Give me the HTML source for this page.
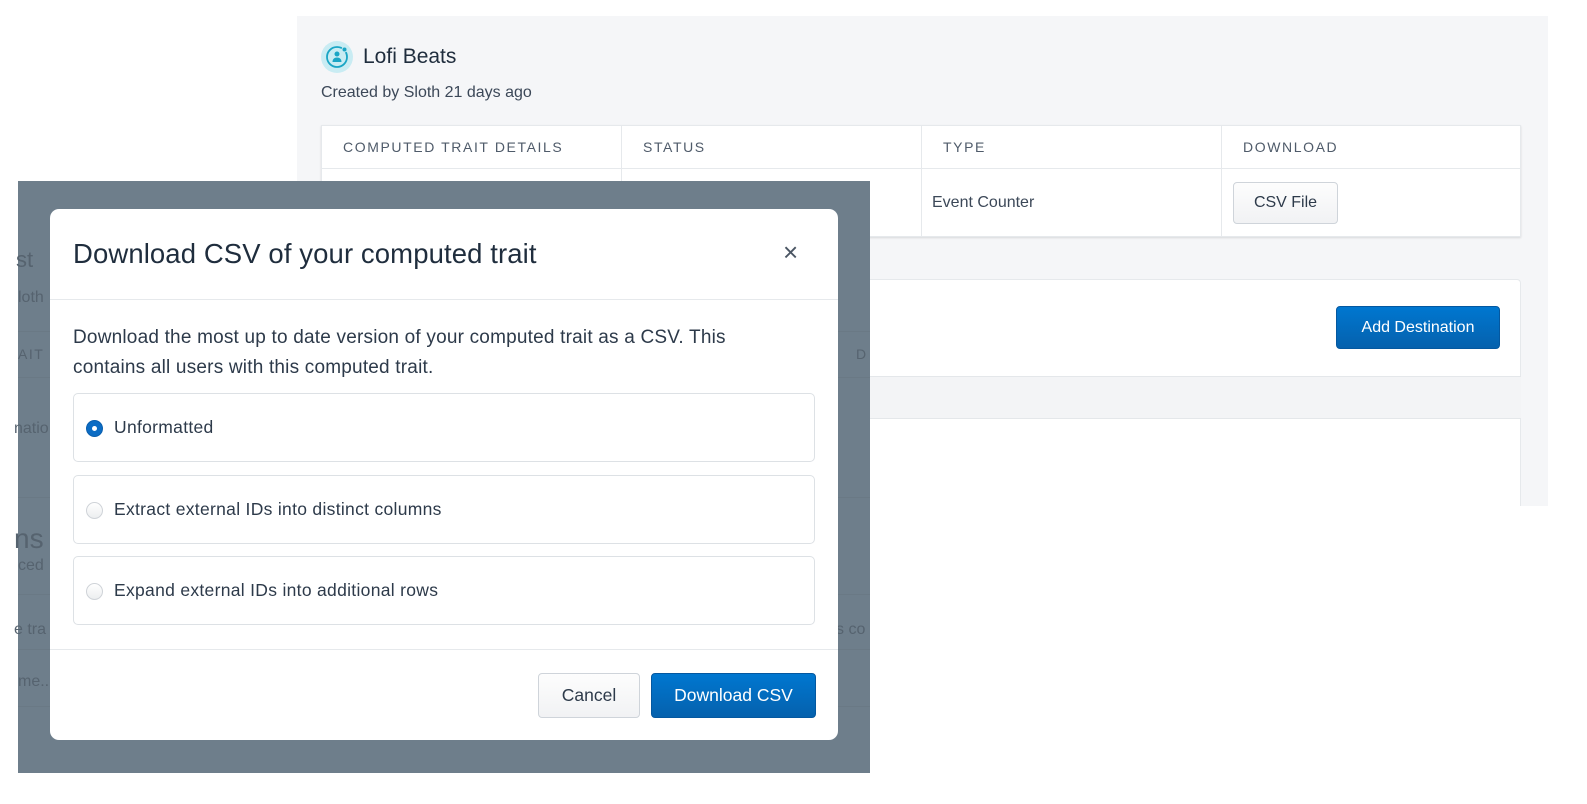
<!DOCTYPE html>
<html><head><meta charset="utf-8"><style>
*{box-sizing:border-box;margin:0;padding:0}
body{width:1587px;height:804px;background:#fff;font-family:"Liberation Sans",sans-serif;position:relative;overflow:hidden;color:#2d3a4a}
.abs{position:absolute}
.panel{left:297px;top:16px;width:1251px;height:490px;background:#f5f6f8}
.table{left:321px;top:125px;width:1200px;height:112px;background:#fff;border:1px solid #e6e9ec;box-shadow:0 1px 2px rgba(0,0,0,.12)}
.th{position:absolute;top:0;height:43px;line-height:43px;font-size:14px;letter-spacing:1.6px;color:#4f5b6a;padding-left:21px;border-right:1px solid #e6e9ec;border-bottom:1px solid #e6e9ec}
.td{position:absolute;top:43px;height:68px;border-right:1px solid #e6e9ec}
.btn{position:absolute;border:1px solid #cfd4da;border-radius:4px;background:linear-gradient(#fdfdfd,#f1f2f4);color:#2d3a4a;text-align:center;font-size:16px}
.blue{position:absolute;border-radius:4px;background:linear-gradient(#0077d0,#0561ad);color:#fff;text-align:center;font-size:16px;border:1px solid #0458a0}
.overlay{left:18px;top:181px;width:852px;height:592px;background:#6e7e8b}
.modal{left:50px;top:209px;width:788px;height:531px;background:#fff;border-radius:9px}
.opt{position:absolute;left:23px;width:742px;height:69px;border:1px solid #dde1e5;border-radius:5px}
.opt span{position:absolute;left:40px;top:23px;font-size:17.5px;color:#2d3a4a;letter-spacing:.3px}
.rad{position:absolute;left:12px;top:26px;width:17px;height:17px;border-radius:50%;border:1px solid #cfd3d8;background:linear-gradient(#fff,#eceef0)}
.ghost{position:absolute;color:#56636f;font-size:16px}
</style></head><body>
<div class="abs panel"></div>
<div class="abs" style="left:321px;top:41px;width:32px;height:32px;border-radius:50%;background:#c9ecf3"></div>
<svg class="abs" style="left:321px;top:41px" width="32" height="32" viewBox="0 0 32 32"><circle cx="16" cy="16" r="10" fill="none" stroke="#1aa5c5" stroke-width="1.8"/><circle cx="16" cy="13" r="2.5" fill="#1aa5c5"/><path d="M11.5 21c0-3 2-4.5 4.5-4.5s4.5 1.5 4.5 4.5z" fill="#1aa5c5"/><circle cx="23.5" cy="8.5" r="2.5" fill="#1aa5c5" stroke="#c9ecf3" stroke-width="1"/></svg>
<div class="abs" style="left:363px;top:45px;font-size:21px;color:#1f2d3d">Lofi Beats</div>
<div class="abs" style="left:321px;top:84px;font-size:16px;color:#3c4858">Created by Sloth 21 days ago</div>
<div class="abs table">
<div class="th" style="left:0;width:300px">COMPUTED TRAIT DETAILS</div>
<div class="th" style="left:300px;width:300px">STATUS</div>
<div class="th" style="left:600px;width:300px">TYPE</div>
<div class="th" style="left:900px;width:299px;border-right:none">DOWNLOAD</div>
<div class="td" style="left:0;width:300px"></div>
<div class="td" style="left:300px;width:300px"></div>
<div class="td" style="left:600px;width:300px"><span style="position:absolute;left:10px;top:25px;font-size:16px;color:#3c4858">Event Counter</span></div>
<div class="btn" style="left:911px;top:56px;width:105px;height:42px;line-height:40px">CSV File</div>
</div>
<div class="abs" style="left:820px;top:279px;width:701px;height:227px;background:#fff;border:1px solid #e6e9ec;border-bottom:none;border-radius:4px 4px 0 0"></div>
<div class="abs" style="left:821px;top:376px;width:700px;height:43px;background:#f3f4f6;border-top:1px solid #e4e7ea;border-bottom:1px solid #e4e7ea"></div>
<div class="blue" style="left:1336px;top:306px;width:164px;height:43px;line-height:41px">Add Destination</div>

<div class="abs overlay">
<div class="ghost" style="left:-2px;top:66px;font-size:22px">st</div>
<div class="ghost" style="left:0;top:108px">loth</div>
<div class="ghost" style="left:0;top:165px;font-size:14px;letter-spacing:1.5px">AIT</div>
<div class="ghost" style="left:-4px;top:239px">natio</div>
<div class="ghost" style="left:-4px;top:342px;font-size:28px">ns</div>
<div class="ghost" style="left:0;top:376px">ced</div>
<div class="ghost" style="left:-4px;top:440px">e tra</div>
<div class="ghost" style="left:0;top:492px">me..</div>
<div class="ghost" style="left:818px;top:440px">s co</div>
<div class="ghost" style="left:838px;top:165px;font-size:14px">D</div>
<div style="position:absolute;left:0;top:150px;width:852px;height:1px;background:#6a7985"></div>
<div style="position:absolute;left:0;top:196px;width:852px;height:1px;background:#6a7985"></div>
<div style="position:absolute;left:0;top:316px;width:852px;height:1px;background:#6a7985"></div>
<div style="position:absolute;left:0;top:413px;width:852px;height:1px;background:#6a7985"></div>
<div style="position:absolute;left:0;top:468px;width:852px;height:1px;background:#6a7985"></div>
<div style="position:absolute;left:0;top:525px;width:852px;height:1px;background:#6a7985"></div>
</div>

<div class="abs modal">
<div class="abs" style="left:23px;top:29px;font-size:27.5px;color:#1f2d3d;letter-spacing:.1px">Download CSV of your computed trait</div>
<div class="abs" style="left:733px;top:28px;font-size:26px;color:#4a5563">×</div>
<div class="abs" style="left:0;top:90px;width:788px;height:1px;background:#e6e9ec"></div>
<div class="abs" style="left:23px;top:114px;width:700px;font-size:19px;line-height:30px;color:#2d3a4a;letter-spacing:.2px">Download the most up to date version of your computed trait as a CSV. This contains all users with this computed trait.</div>
<div class="opt" style="top:184px"><div class="rad" style="background:#0b6cc4;border-color:#0a5fae"><div style="position:absolute;left:5px;top:5px;width:5px;height:5px;border-radius:50%;background:#fff"></div></div><span>Unformatted</span></div>
<div class="opt" style="top:266px"><div class="rad"></div><span>Extract external IDs into distinct columns</span></div>
<div class="opt" style="top:347px"><div class="rad"></div><span>Expand external IDs into additional rows</span></div>
<div class="abs" style="left:0;top:440px;width:788px;height:1px;background:#e6e9ec"></div>
<div class="btn" style="left:488px;top:464px;width:102px;height:45px;line-height:43px;font-size:17.5px">Cancel</div>
<div class="blue" style="left:601px;top:464px;width:165px;height:45px;line-height:43px;font-size:17.5px">Download CSV</div>
</div>
</body></html>
